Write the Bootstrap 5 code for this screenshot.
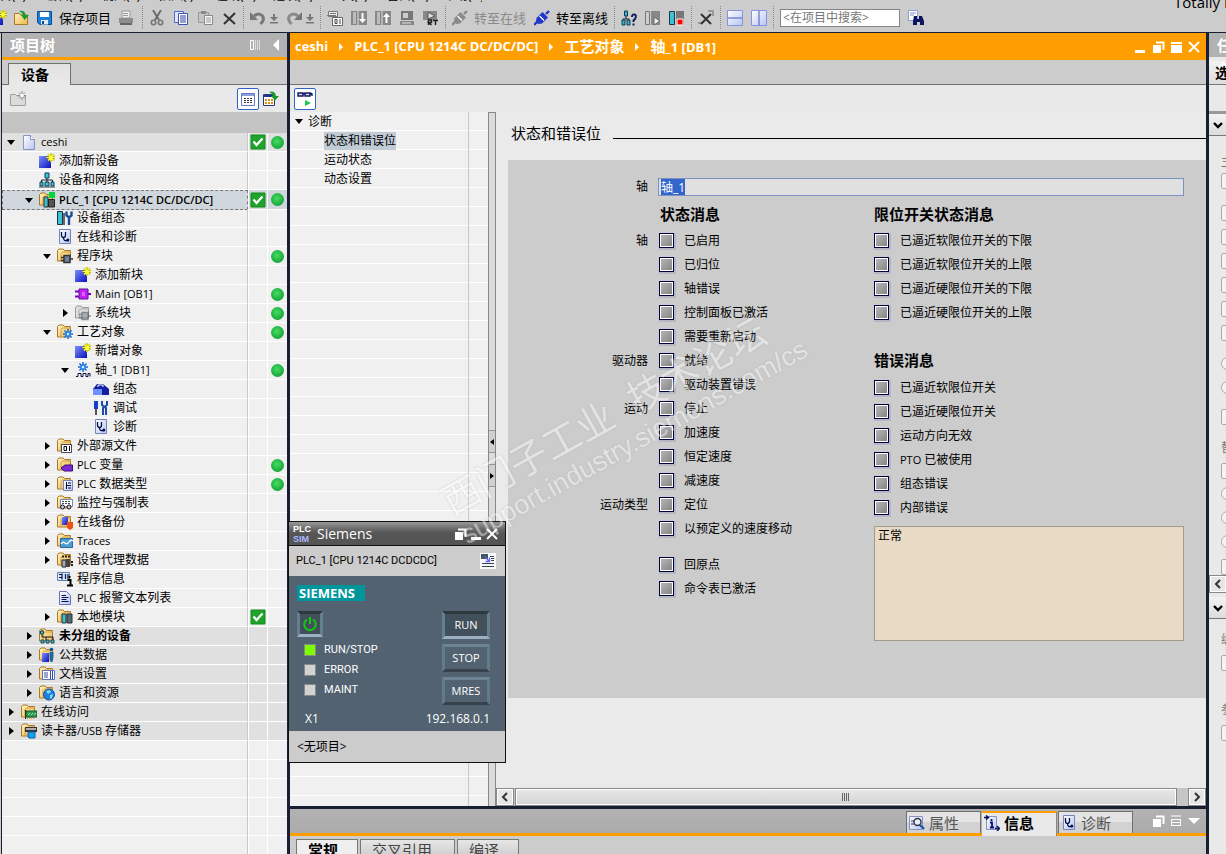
<!DOCTYPE html>
<html lang="zh-CN">
<head>
<meta charset="utf-8">
<meta name="viewport" content="width=device-width, initial-scale=1">
<title>ceshi - PLC_1 - 轴_1 [DB1]</title>
<link rel="stylesheet" href="https://cdn.jsdelivr.net/npm/bootstrap@5.3.0/dist/css/bootstrap.min.css">
<style>
:root{--edge:#191f33;--orange:#ff9e00;--face:#ccc;--head:#b2b2b2;--pane:#e9e9e9;--rule:#707070}
body{font:12px/18px "Open Sans","Noto Sans CJK SC",sans-serif;color:#000;background:var(--face);height:100vh}
button{font:inherit}
a{color:inherit;text-decoration:none}
.ico{width:16px;height:16px;flex:none;display:block;overflow:visible}
.half{width:7px;overflow:hidden}
.arw{width:8px}
/* menu bar and toolbar */
.menu{height:3px;gap:19px;align-items:flex-end}
.menu a{line-height:15px;width:38px;white-space:nowrap;flex:none}
.menu a:first-child{width:26px;direction:rtl}
.brandtxt{font-size:15px;line-height:20px;width:52px;white-space:nowrap;overflow:hidden;height:12px;display:flex;align-items:flex-end}
.tools{height:30px;border-bottom:1px solid var(--edge)}
.tools .grp{display:flex;align-items:center;gap:8px;padding:0 6px;border-right:1px dotted #888;height:23px}
.tools .grp.first{gap:7px;padding:0 8px 0 0}
.tools .grp.open{border:0}
.tb{border:0;background:none;padding:0;display:flex;align-items:center;gap:6px;font-size:13px;color:#000;white-space:nowrap}
.tb.pair{gap:4px}
.tb.off{color:#8a8a8a}
.find{width:120px;height:18px;border:1px solid #858585;background:#fff;font-size:12px;padding:0 2px;border-radius:0}
.find::placeholder{color:#777;opacity:1}
/* project tree */
.side{width:289px;border-left:1px solid var(--edge);border-right:3px solid var(--edge);margin-left:1px;flex:none}
.bar{height:24px;font-size:15px;font-weight:bold;color:#fff;background:var(--head);line-height:24px}
.side .bar{box-sizing:content-box;border-bottom:3px solid var(--orange)}
.tabs{height:25px;background:var(--face);border-bottom:1px solid var(--rule);align-items:flex-end}
.side .tabs{padding-left:6px}
.tabon{border:1px solid var(--rule);border-bottom:0;background:linear-gradient(#e2e2e2,#e9e9e9);height:22px;width:63px;font-size:14px;font-weight:bold;line-height:20px;margin-bottom:-1px;padding:0 0 0 12px;text-align:left}
.strip{height:27px;background:var(--pane)}
.boxed{border:1px solid #2f62c8;background:#fff;width:22px;height:22px;padding:2px;border-radius:2px}
.gap21{height:21px;background:#c3c3c3;flex:none}
.tree{list-style:none;margin:0;padding:0;flex:1 1 0;overflow:hidden;background:repeating-linear-gradient(#f0f0f0 0 18px,#fff 18px 19px)}
.tree li{display:grid;grid-template-columns:1fr 20px 19px;height:19px}
.tree .rest{height:100%}
.cellm{display:flex;align-items:center;gap:4px;white-space:nowrap;border-right:1px solid #c8c8c8;min-width:0;padding-left:3px}
.st{border-right:1px solid #fff;border-left:1px solid #fff;display:flex;align-items:center;justify-content:center}
.tree li>*{border-bottom:1px solid #fff}
.tree .st+.st{border-left:0;border-right:0}
.tree .rest>*{border-bottom:0}
.shade>*{background:#e0e0e0}
.d1 .cellm{padding-left:21px}.d2 .cellm{padding-left:39px}.d3 .cellm{padding-left:57px}.d4 .cellm{padding-left:75px}
.sel>*{background:#d0d7dc}
.tree .sel .cellm{border:1px dashed #777;padding-left:20px}
.cellm a{font-size:11px}
.sel a{font-weight:600}
.cellm a b,.zh{font-size:12px;font-weight:inherit}
.tw{width:12px;height:12px;flex:none;display:flex;align-items:center;justify-content:center}
.tw.dn::before{content:"";border:4px solid transparent;border-top:5px solid #000;border-bottom:0}
.tw.rt::before{content:"";border:4px solid transparent;border-left:5px solid #000;border-right:0}
.dot::before{content:"";width:13px;height:13px;border-radius:50%;background:radial-gradient(circle at 45% 40%,#44dd62,#1fae40 60%,#17923a)}
/* editor */
.ed .bar{background:var(--orange);height:27px;line-height:25px;font-size:13px;gap:11px;padding-left:5px}
.bar .z{font-size:15px}
.bar i{border:4px solid transparent;border-left:4px solid #fff;border-right:0}
.nav2{width:198px;flex:none;background:linear-gradient(90deg,transparent 178px,#c8c8c8 178px 179px,transparent 179px),repeating-linear-gradient(#f0f0f0 0 18px,#fff 18px 19px)}
.nav2 ul{list-style:none;margin:0;padding:0}
.nav2 li{height:19px;display:flex;align-items:center;gap:3px;padding-left:3px}
.nav2 li.sub{padding-left:34px}
.nav2 .on{background:#c1cbd6}
.split{width:8px;flex:none;background:#dcdcdc;border:1px solid #888;border-width:1px 1px 0;flex-direction:column;gap:11px;padding-top:317px}
.split button{width:6px;height:23px;border:1px solid #999;border-width:1px 0;background:#d0d0d0;padding:0;display:flex;align-items:center;justify-content:center}
.split .l::before{content:"";border:3px solid transparent;border-right:4px solid #000;border-left:0}
.split .r::before{content:"";border:3px solid transparent;border-left:4px solid #000;border-right:0}
.work{background:#eaeaea;min-width:0}
.ttl{padding:11px 0 0 15px;gap:12px;height:48px}
.ttl .ln{flex:1;border-top:1px solid #000;margin-top:15px;height:0}
.ttl h1{font-size:15px;line-height:20px;font-weight:400;margin:0;white-space:nowrap}
.sheet{background:var(--face);margin-left:12px;padding:18px 22px 57px 0}
.gl{width:140px;text-align:right;flex:none}
.field{height:18px;border:1px solid #7d93bf;background:#e0e0e0;font-size:12px;line-height:16px;padding:0 2px;flex:1;min-width:0;outline:0;border-radius:0;margin-left:10px}
.field::selection{background:#3366cc;color:#fff}
.colA{width:366px;flex:none}
.sheet h2{font-size:15px;line-height:32px;font-weight:bold;margin:0;height:32px;padding-top:2px}
.sheet h2.er{height:51px;padding-top:20px}
.srow{display:flex;height:24px;align-items:center;padding-top:2px}
.srow label{display:flex;align-items:center;gap:11px;white-space:nowrap}
.colA .srow label{margin-left:11px;gap:10px}
.sheet input[type=checkbox]{appearance:none;width:15px;height:15px;margin:0 0 2px;border:1px solid #00003c;box-shadow:inset 0 0 0 1px #fff,1px 1px 0 1px #b4b8c4;background:linear-gradient(135deg,#bababa,#808080)}
.skip{margin-top:12px}
.note{width:100%;height:115px;margin-top:7px;border:1px solid #a29a8c;background:#e8dac5;resize:none;padding:0 3px;line-height:18px;display:block;border-radius:0;outline:0}
.hs{height:18px;background:#c6c6c6;gap:1px}
.hs button,.sbtn{width:18px;height:18px;border:1px solid #888;background:#e6e6e6;padding:0;display:flex;align-items:center;justify-content:center;box-shadow:inset 0 0 0 1px #fff}
.hs .thumb{flex:1;margin-right:10px;border:1px solid #888;background:linear-gradient(#e8e8e8,#d4d4d4);box-shadow:inset 0 0 0 1px #fff;display:flex;align-items:center;justify-content:center}
.grip{width:8px;height:8px;background:repeating-linear-gradient(90deg,#666 0 1px,transparent 1px 2px)}
/* inspector */
.insp{height:48px;border-top:3px solid var(--edge);flex:none}
.insp .row1{height:24px;background:linear-gradient(#b2b2b2,#acacac);align-items:flex-end;gap:1px;padding-right:4px}
.itab{width:75px;height:22px;border:1px solid var(--rule);border-bottom:0;background:linear-gradient(#e4e4e4 0 50%,#d2d2d2 50%);display:flex;align-items:center;gap:4px;padding:0 2px;font-size:15px;color:#555;white-space:nowrap;border-radius:0}
.itab.on{border-color:var(--orange);border-top:2px solid var(--orange);border-left:0;border-right-color:#888;background:var(--pane);color:#000;font-weight:bold;height:25px;margin-bottom:-3px;padding-bottom:3px}
.insp .row2{border-top:3px solid var(--orange);padding:3px 6px 0;gap:2px;height:21px;overflow:hidden}
.jtab{border:1px solid #777;background:linear-gradient(#e6e6e6,#c8c8c8);font-size:15px;line-height:17px;padding:0 0 0 11px;width:62px;height:22px;color:#444;flex:none;text-align:left}
.jtab.on{font-weight:bold;color:#000;background:#efefef}
.jtab.w{width:95px}
/* task cards */
.task{width:20px;border-left:3px solid var(--edge);flex:none;background:var(--pane);overflow:hidden}
.task .cap{height:22px;background:linear-gradient(#f2f2f2,#dcdcdc);border-bottom:1px solid #777;display:flex;align-items:center;font-weight:bold;font-size:14px;white-space:nowrap;overflow:hidden;padding-left:6px}
.task .cap.tall{height:24px}
.task .band{height:29px;border-bottom:3px solid #999}
.task .in{padding:14px 0 0 12px;display:flex;flex-direction:column}
.task .in.top{padding-top:19px}
.task input{width:24px;height:16px;border:1px solid #aaa;background:#f4f4f4;appearance:none;margin:0 0 8px;flex:none;border-radius:2px}
.task input[type=radio]{width:13px;height:13px;border-radius:50%;margin-bottom:11px}
.task .t{height:14px;line-height:14px;color:#777;overflow:hidden;width:9px}
/* simulator window */
.plcsim{position:absolute;left:288px;top:488px;width:218px;height:242px;border:1px solid #111;z-index:4;font-size:11px;background:var(--face);display:flex;flex-direction:column}
.plcsim .cap{height:24px;background:linear-gradient(#999,#6a6a6a 30%,#555 50%);border-bottom:1px solid #111;color:#fff;font-size:14px;padding:0 5px 0 4px}
.logo{font:bold 9px/10px "Liberation Sans",sans-serif;color:#fff;width:20px}
.logo span{color:#a9b6ff;display:block}
.plcsim .idn{height:30px;padding:0 9px 0 7px;line-height:30px;font-family:Roboto,sans-serif}
.plcsim .body2{background:#526270;color:#fff;height:155px;padding:9px 15px 0 8px}
.sie{background:#00969b;font-weight:bold;font-size:13px;line-height:16px;padding:0 2px;width:68px}
.pbtn{width:48px;height:28px;background:#526270;border:3px solid #627b8a;border-top-color:#6b8595;border-bottom-color:#37424c;color:#fff;font-size:11px;padding:0;line-height:20px}
.pbtn.dn{background:#42505c;border-color:#2e3840 #64808e #9cb0c4 #64808e}
.pbtn.sq{width:26px;height:26px;margin-bottom:3px}
.lrow{display:flex;align-items:center;gap:8px;height:20px;padding-left:7px;font-family:Roboto,sans-serif}
.led{width:12px;height:12px;border:1px solid #888;background:#d2d2d2}
.led.go{background:#7cff00}
.wm{position:absolute;left:435px;top:453px;transform:rotate(-29deg);transform-origin:0 0;color:#fff;opacity:.45;text-shadow:0 0 2px #999;z-index:6;pointer-events:none;white-space:nowrap;font-family:"Liberation Sans","Noto Sans CJK SC",sans-serif}
.wm div:first-child{font-size:38px;line-height:44px}
.wm div:last-child{font-size:27px;line-height:28px}
</style>
</head>
<body class="d-flex flex-column overflow-hidden">
<svg width="0" height="0" class="position-absolute" aria-hidden="true"><defs>
<linearGradient id="gf" x1="0" y1="0" x2="1" y2="1"><stop offset="0" stop-color="#fff2c0"/><stop offset="1" stop-color="#eeb84c"/></linearGradient>
<linearGradient id="gb" x1="0" y1="0" x2="1" y2="1"><stop offset="0" stop-color="#7c90ff"/><stop offset="1" stop-color="#0a10b8"/></linearGradient>
<linearGradient id="gw" x1="0" y1="0" x2="1" y2="1"><stop offset="0" stop-color="#fff"/><stop offset="1" stop-color="#b8c4f0"/></linearGradient>
<symbol id="folder" viewBox="0 0 16 16"><path d="M.5 2.500 2 1h4l1.500 1.500h6V13H.5z" fill="url(#gf)" stroke="#a87a28"/><path d="M4 13V5.500L5.500 4H14" fill="none" stroke="#d29c3c"/></symbol>
<symbol id="folderg" viewBox="0 0 16 16"><path d="M.5 2.500 2 1h4l1.500 1.500h6V13H.5z" fill="#dedede" stroke="#999"/><path d="M4 13V5.500L5.500 4H14" fill="none" stroke="#aaa"/></symbol>
<symbol id="page" viewBox="0 0 16 16"><path d="M2.500 1.500h7l4 4v10h-11z" fill="url(#gw)" stroke="#8494c4"/><path d="M9.500 1.500v4h4" fill="#fff" stroke="#8494c4"/></symbol>
<symbol id="doc" viewBox="0 0 16 16"><path d="M2.500 1.500h7l4 4v9h-11z" fill="url(#gw)" stroke="#6474b4"/><path d="M4.500 5.500H9M4.500 7.500h7M4.500 9.500h5M4.500 11.500h7" stroke="#00104c"/></symbol>
<symbol id="newd" viewBox="0 0 16 16"><path d="M0 3h12v12H0z" fill="url(#gb)"/><path d="M12 0v9M7.500 4.500h9M9 1.500l6 6M15 1.500l-6 6" stroke="#8c8c00" stroke-width="1.800"/><path d="M12 0v9M7.500 4.500h9M9 1.500l6 6M15 1.500l-6 6" stroke="#ffff3c" stroke-width="1.200"/></symbol>
<symbol id="net" viewBox="0 0 16 16"><path d="M8 5v3M2.500 11V8h11v3M8 8v3" fill="none" stroke="#123"/><path d="M6 1h4v5H6zM1 10h3v4H1zM6 10h4v4H6zM12 10h3v4h-3z" fill="#35c8d8" stroke="#1b3a50"/><path d="M0 15h16" stroke="#345"/></symbol>
<symbol id="o-plc" viewBox="0 0 16 16"><path d="M5 5h4v10H5z" fill="#3ac0d0" stroke="#333"/><path d="M9.500 7.500h6V15h-6z" fill="#555" stroke="#222"/><path d="M10 0h6v6h-6z" fill="#00d640"/></symbol>
<symbol id="conf" viewBox="0 0 16 16"><path d="M.5 1.500h5v13h-5z" fill="#38c4d4" stroke="#234"/><path d="M6 3h2v12H6z" fill="#667"/><path d="M9.500 1.500v4l2.500 2 2.500-2v-4M12 7v8" fill="none" stroke="#1c4a94" stroke-width="2.400"/></symbol>
<symbol id="diag" viewBox="0 0 16 16"><path d="M2.500.500h11v14h-11z" fill="url(#gw)" stroke="#7484bc"/><path d="M4.500 3v3q0 2.500 2 2.500T8.500 6V3M6.500 8.500q0 4 4 3" fill="none" stroke="#00104c" stroke-width="1.300"/><circle cx="10.800" cy="11" r="1.500" fill="#00104c"/></symbol>
<symbol id="o-block" viewBox="0 0 16 16"><path d="M4 9.500h3M4 12.500h3M13 11h3" stroke="#333" stroke-width="1.500"/><path d="M7 7.500h6v7H7z" fill="#70809c" stroke="#333" stroke-width="1.500"/></symbol>
<symbol id="ob" viewBox="0 0 16 16"><path d="M0 5.500h4M0 10.500h4M12 8h4" stroke="#70c" stroke-width="2"/><path d="M4 3h9v10H4z" fill="#c020f0" stroke="#60109c"/><path d="M7 6h3v4H7z" fill="#d860ff"/></symbol>
<symbol id="gear" viewBox="0 0 16 16"><path d="M8 0v16M0 8h16M2.300 2.300l11.400 11.400M13.700 2.300 2.300 13.700" stroke="#1b6ad0" stroke-width="2.400"/><circle cx="8" cy="8" r="5" fill="#2c8ae8"/><circle cx="8" cy="8" r="1.800" fill="#fff"/></symbol>
<symbol id="axis" viewBox="0 0 16 16"><use href="#gear" x="3" y="0" width="10" height="10"/><path d="M1 14.500h2v-3h3v3h2v-3h3v3h2v-3h2v3" fill="none" stroke="#101040"/></symbol>
<symbol id="tbox" viewBox="0 0 16 16"><path d="M0 8 4 3h6l6 5v6H0z" fill="#1520a0"/><path d="M0 8h9v6H0z" fill="#6f90ff"/><path d="M5 6V4h5v2" stroke="#fff" fill="none"/></symbol>
<symbol id="test" viewBox="0 0 16 16"><path d="M1 1h4v8H1z" fill="#1040d0"/><path d="M3 9v6" stroke="#222" stroke-width="1.500"/><path d="M9 1v4l4 3v7M14 1v4l-4 3v7" fill="none" stroke="#1c4aa8" stroke-width="2"/></symbol>
<symbol id="o-01" viewBox="0 0 16 16"><path d="M4.500 6.500h10v8h-10z" fill="#fff" stroke="#445"/><path d="M7 8.500h2.500v4H7zM12.500 8v5" fill="none" stroke="#001"/></symbol>
<symbol id="o-tag" viewBox="0 0 16 16"><path d="M4 11l4-3h7.500v6H7z" fill="#7a2ad0" stroke="#3c0c80"/></symbol>
<symbol id="o-type" viewBox="0 0 16 16"><path d="M6.500 4.500h9v10h-9z" fill="url(#gw)" stroke="#7484bc"/><path d="M9.500 6v7M9 9.500h2M11 7h3M11 9.500h3M11 12h3" stroke="#001040"/></symbol>
<symbol id="o-watch" viewBox="0 0 16 16"><path d="M3.500 4.500h12v7h-12z" fill="#fff" stroke="#7888b8"/><path d="M5 6.500h9M5 8.500h9" stroke="#445" stroke-dasharray="2 1"/><circle cx="5.500" cy="12" r="2" fill="#ccd" stroke="#112"/><circle cx="12" cy="12" r="2" fill="#ccd" stroke="#112"/></symbol>
<symbol id="o-bak" viewBox="0 0 16 16"><path d="M5 3h6v8H5z" fill="url(#gb)"/><path d="M10 8h6v6l-3 2-3-2z" fill="#f05010"/></symbol>
<symbol id="o-trace" viewBox="0 0 16 16"><path d="M3.500 5.500h12v9h-12z" fill="#4c9cd4" stroke="#2a6a9c"/><path d="M4 11q2-3 4-1t4-1 4-1" fill="none" stroke="#fff" stroke-width="1.300"/></symbol>
<symbol id="o-proxy" viewBox="0 0 16 16"><path d="M5 8h4v7H5z" fill="#aaa" stroke="#222"/><path d="M9 7h4v8H9z" fill="#444"/><path d="M5 4.500h9M15 9v6" stroke="#222" stroke-width="2" stroke-dasharray="2 1"/></symbol>
<symbol id="pinfo" viewBox="0 0 16 16"><path d="M.5 1.500h12v8H.5z" fill="#d4e6f8" stroke="#5c84b4"/><path d="M2 3.500h3M2 6.500h3M5 2.500v6M8.500 3v5M11 3v5" stroke="#114" stroke-width="1.200"/><path d="M12.500 5v2M10.500 9h3v5M10 14.500h6" fill="none" stroke="#000" stroke-width="2"/></symbol>
<symbol id="o-mod" viewBox="0 0 16 16"><path d="M5 5h4v9H5z" fill="#3ac0d0" stroke="#333"/><path d="M10 5h5v9h-5z" fill="#567" stroke="#233"/></symbol>
<symbol id="o-ung" viewBox="0 0 16 16"><path d="M3 2v7h11v3M7 9v3" fill="none" stroke="#113"/><path d="M1.500 3h3v3h-3zM2 12h3v3H2zM7 12h3v3H7zM12 12h3v3h-3z" fill="#3ac0d0" stroke="#245"/></symbol>
<symbol id="o-com" viewBox="0 0 16 16"><path d="M3 6h7v9H3z" fill="url(#gb)"/><circle cx="12.500" cy="2.500" r="1.800" fill="#158"/><path d="M10.500 5h4v5l-1 5h-2l-1-5z" fill="#1c68a0"/></symbol>
<symbol id="o-doc" viewBox="0 0 16 16"><path d="M3.500 4.500h12v9h-12z" fill="#fff" stroke="#5c70c0"/><path d="M5 7h4M5 9h4M5 11h4M11.500 5v8M13.500 5v8" stroke="#334a9c"/></symbol>
<symbol id="o-lang" viewBox="0 0 16 16"><circle cx="10" cy="9.500" r="5.500" fill="#2080e0" stroke="#1450a0"/><path d="M7 6l4-1 1 2-3 2zM11 10l3-1-1 4-2 1z" fill="#78e0e8"/></symbol>
<symbol id="o-acc" viewBox="0 0 16 16"><path d="M4.500 6v9" stroke="#222"/><path d="M5 7h11v6H5z" fill="#2c9a50" stroke="#145c2c"/><path d="M6 14.500h8" stroke="#e0b030" stroke-dasharray="1 1"/><path d="M7 11l2-2M10 11l2-2M13 11l2-2" stroke="#9ee0b0" fill="none"/></symbol>
<symbol id="o-usb" viewBox="0 0 16 16"><path d="M4 4h12v5H4z" fill="#333"/><path d="M5 6h10" stroke="#ddd" stroke-width="1.500"/><path d="M7 9h7v6H8l-1-1z" fill="#18a0f0" stroke="#0a60a8"/></symbol>
<symbol id="chk" viewBox="0 0 16 16"><path d="M1 1h14v14H1z" fill="#1fa32b" stroke="#128a1c"/><path d="M3.500 7.500 6.500 11 12.500 4.500" fill="none" stroke="#fff" stroke-width="2.200"/></symbol>
<symbol id="open" viewBox="0 0 16 16"><path d="M.5 3.500h5l1 1.500h7v9.500H.5z" fill="url(#gf)" stroke="#a87a28"/><path d="M5 1q6-1 6.500 4H15l-4.500 5L7 5h2Q8.500 2.500 5 1z" fill="#1c9a30"/></symbol>
<symbol id="save" viewBox="0 0 16 16"><path d="M.5 1.500h14v13H3l-2.500-2z" fill="#1a80d8" stroke="#0a4c94"/><path d="M3 2h9v5H3z" fill="#fff"/><path d="M4 10h7v4.500H4z" fill="#dfeaf6"/><path d="M5 11h2v3H5z" fill="#0a4c94"/></symbol>
<symbol id="print" viewBox="0 0 16 16"><path d="M4 1h8v7H4z" fill="#eee" stroke="#999"/><path d="M5 3.500h5M5 5.500h5" stroke="#999"/><path d="M1 8h14v5H1z" fill="#8c8c8c"/><path d="M2 14h12" stroke="#666" stroke-width="2"/></symbol>
<symbol id="cut" viewBox="0 0 16 16"><path d="M4 0l6 10M12 0 6 10" stroke="#666" stroke-width="1.800"/><circle cx="4.500" cy="12.500" r="2.200" fill="none" stroke="#777" stroke-width="1.600"/><circle cx="11.500" cy="12.500" r="2.200" fill="none" stroke="#777" stroke-width="1.600"/></symbol>
<symbol id="copy" viewBox="0 0 16 16"><path d="M1.500 1.500h9v11h-9z" fill="#dfe6ff" stroke="#5468c4"/><path d="M5.500 3.500h9v11h-9z" fill="#fff" stroke="#3c50b4"/><path d="M7 6h6M7 8h6M7 10h6M7 12h6" stroke="#3040a0"/></symbol>
<symbol id="paste" viewBox="0 0 16 16"><path d="M1.500 2.500h10v10h-10z" fill="#c4c4c4" stroke="#999"/><path d="M4 1h5v3H4z" fill="#888"/><path d="M7.500 5.500h8v9h-8z" fill="#f6f6f6" stroke="#888"/><path d="M9 8h5M9 10h5M9 12h5" stroke="#999"/></symbol>
<symbol id="del" viewBox="0 0 16 16"><path d="M3 4l11 10M14 3 3 14" stroke="#333" stroke-width="2"/></symbol>
<symbol id="undo" viewBox="0 0 16 16"><path d="M4 6q5-4 8.500 0 2.500 4-2 8" fill="none" stroke="#777" stroke-width="3"/><path d="M0 2v8h8z" fill="#777"/></symbol>
<symbol id="redo" viewBox="0 0 16 16"><path d="M12 6Q7 2 3.500 6 1 10 5.500 14" fill="none" stroke="#8a8a8a" stroke-width="3"/><path d="M16 2v8H8z" fill="#777"/></symbol>
<symbol id="dwn" viewBox="0 0 8 16"><path d="M4 4v4" stroke="#777" stroke-width="2"/><path d="M0 7h8l-4 4zM0 12h8v1.500H0z" fill="#777"/></symbol>
<symbol id="comp" viewBox="0 0 16 16"><path d="M1.500 1.500h9v5h-9z" fill="#eee" stroke="#777"/><path d="M3 3.500h6M0 5.500h9" stroke="#777"/><path d="M5.500 7.500h10v8h-10z" fill="#fff" stroke="#666"/><path d="M8 9.500h2v4H8zM13 9v5" fill="none" stroke="#444"/></symbol>
<symbol id="dl" viewBox="0 0 16 16"><path d="M0 1h16v14H0z" fill="#888"/><path d="M2 2h3v12H2z" fill="#bbb"/><path d="M7 1v14" stroke="#ddd"/><path d="M11.500 3v7" stroke="#fff" stroke-width="2"/><path d="M8 9h7l-3.500 4z" fill="#fff"/></symbol>
<symbol id="ul" viewBox="0 0 16 16"><path d="M0 1h16v14H0z" fill="#888"/><path d="M2 2h3v12H2z" fill="#bbb"/><path d="M7 1v14" stroke="#ddd"/><path d="M11.500 6v7" stroke="#fff" stroke-width="2"/><path d="M8 7h7l-3.500-4z" fill="#fff"/></symbol>
<symbol id="pc" viewBox="0 0 16 16"><path d="M2 1h12v9H2z" fill="#777"/><path d="M4 3h5v5H4z" fill="#ccc"/><path d="M1 11h14v4H1z" fill="#888"/><path d="M3 13h9" stroke="#ddd"/></symbol>
<symbol id="rt" viewBox="0 0 16 16"><path d="M0 1h14v9H0z" fill="#888"/><path d="M5 2l7 4-7 3z" fill="#ddd" stroke="#555"/><path d="M5.500 15v-5h3v2.500h-3l3 2.500M10 10.500h5M12.500 10v5" fill="none" stroke="#222" stroke-width="1.500"/></symbol>
<symbol id="plug" viewBox="0 0 16 16"><path d="M0 15l4-4M12 4l3-3" stroke="currentColor" stroke-width="2.400"/><path d="M2.500 8l6-6 5.500 5.500-6 6-4 .5L2 11z" fill="currentColor"/><path d="M5.500 6l4.500 4.500" stroke="#fff" stroke-width="1.200"/></symbol>
<symbol id="netq" viewBox="0 0 16 16"><path d="M5 6v3M2 11V9h6v2" fill="none" stroke="#123"/><path d="M3.500 1h3v5h-3zM1 10h3v5H1zM6 10h3v5H6z" fill="#2cb8c8" stroke="#1b3a50"/><path d="M11 7q0-3 2.500-2.500T14 9l-1.500 1.500V12M12.500 13.500v2" fill="none" stroke="#102060" stroke-width="2"/></symbol>
<symbol id="st1" viewBox="0 0 16 16"><path d="M.5 1.500h4v13h-4z" fill="#ccc" stroke="#777"/><path d="M6 1h9v14H6z" fill="#888"/><path d="M9 7l6 4-6 4z" fill="#eee" stroke="#666"/></symbol>
<symbol id="st2" viewBox="0 0 16 16"><path d="M.5 1.500h5v13h-5z" fill="#38c4d4" stroke="#234"/><path d="M7 1h8v14H7z" fill="#777"/><path d="M8 9h6v6H8z" fill="#f00" stroke="#fff"/></symbol>
<symbol id="xl" viewBox="0 0 16 16"><path d="M10 1h5v5M0 13h5" stroke="#999" stroke-width="2" fill="none"/><path d="M3 4l10 10M13 4 3 14" stroke="#333" stroke-width="2"/></symbol>
<symbol id="sh" viewBox="0 0 16 16"><path d="M.5.500h15v15H.5z" fill="url(#gw)" stroke="#8494e0"/><path d="M1 8h14" stroke="#4058c8"/></symbol>
<symbol id="sv" viewBox="0 0 16 16"><path d="M.5.500h15v15H.5z" fill="url(#gw)" stroke="#8494e0"/><path d="M8 1v14" stroke="#4058c8"/></symbol>
<symbol id="bino" viewBox="0 0 16 16"><path d="M.5.500h9v10h-9z" fill="#fff" stroke="#8ca0d8"/><path d="M2 3h6M2 5h4" stroke="#8090c8"/><path d="M6 6h3v3h2V6h3l2 5v4h-4v-3h-3v3H5v-4z" fill="#0c1460"/></symbol>
<symbol id="newf" viewBox="0 0 16 16"><path d="M.5 3.500h5L7 5h8.500v9.500H.5z" fill="#dcdcdc" stroke="#a0a0a0"/><path d="M12 0v9M7.500 4.500h9M9 1.500l6 6M15 1.500l-6 6" stroke="#888"/><circle cx="12" cy="4.500" r="1.800" fill="#fff"/></symbol>
<symbol id="lst" viewBox="0 0 16 16"><path d="M1.500 2.500h13v12h-13z" fill="#fff" stroke="#6478c4"/><path d="M2 4h12" stroke="#8ca0e0" stroke-width="2"/><path d="M4 7.500h9M4 9.500h9M4 11.500h9" stroke="#334" stroke-dasharray="2 1"/></symbol>
<symbol id="exp" viewBox="0 0 16 16"><path d="M.5 3.500h11v11H.5z" fill="#fff" stroke="#223a80"/><path d="M1 5h10" stroke="#223a80" stroke-width="2"/><path d="M3 8v6M6 8v6M9 8v6" stroke="#e09010" stroke-width="2" stroke-dasharray="2 1"/><path d="M6 1q6-2 7 4h3l-4 4.500L8 5h2Q9 2 6 1z" fill="#1c9a30"/></symbol>
<symbol id="glas" viewBox="0 0 16 16"><path d="M1 2h5v3H1zM8 2h5v3H8zM6 3h2M13 2l2 1v2" fill="#dde" stroke="#0c1460" stroke-width="1.400"/><path d="M8 9l6 3-6 3z" fill="#1cc850"/></symbol>
<symbol id="prop" viewBox="0 0 16 16"><path d="M.5 1.500h13v13H.5z" fill="url(#gw)" stroke="#8494c4"/><path d="M2 6h3M2 9h3" stroke="#336"/><circle cx="8.500" cy="7" r="3.500" fill="#e8eefc" stroke="#334" stroke-width="1.400"/><path d="M11 10l4 4" stroke="#1c58a8" stroke-width="2.400"/></symbol>
<symbol id="info" viewBox="0 0 16 16"><path d="M2.500 1.500h10v13h-10z" fill="url(#gw)" stroke="#8494c4"/><path d="M0 2.500h4M2 .500l2.500 2L2 4.500M11 13.500h4M13 11l2.500 2.500L13 16" fill="none" stroke="#0c1460" stroke-width="1.500"/><path d="M7.500 4v2M6 7.500h2V12M6 12.500h4" fill="none" stroke="#0c1460" stroke-width="1.800"/></symbol>
<symbol id="w-min" viewBox="0 0 16 16"><path d="M3 11h10v3H3z" fill="#fff"/></symbol>
<symbol id="w-res" viewBox="0 0 16 16"><path d="M3 6h8v8H3z" fill="#fff"/><path d="M6 3.500h7.500V11" fill="none" stroke="#fff" stroke-width="2"/></symbol>
<symbol id="w-max" viewBox="0 0 16 16"><path d="M3 3h11v2H3zM3 6h11v8H3z" fill="#fff"/></symbol>
<symbol id="w-x" viewBox="0 0 16 16"><path d="M3 3l10 10M13 3 3 13" stroke="#fff" stroke-width="2"/></symbol>
<symbol id="w-ls" viewBox="0 0 16 16"><path d="M3 3h10M3 6.500h10M3 9.500h10M3 12.500h10M3.500 6v7M12.500 6v7" stroke="#fff"/></symbol>
<symbol id="w-dn" viewBox="0 0 16 16"><path d="M2 5h12l-6 6z" fill="#fff"/></symbol>
<symbol id="cols" viewBox="0 0 16 16"><path d="M3.500 3.500h3v9h-3z" fill="none" stroke="#fff"/><path d="M8.500 3v10M10.500 3v10M12.500 3v10" stroke="#ddd"/></symbol>
<symbol id="w-lf" viewBox="0 0 16 16"><path d="M12 2v12L6 8z" fill="#fff"/></symbol>
<symbol id="chl" viewBox="0 0 16 16"><path d="M10 4 6 8l4 4" fill="none" stroke="#333" stroke-width="2"/></symbol>
<symbol id="chr" viewBox="0 0 16 16"><path d="M6 4l4 4-4 4" fill="none" stroke="#333" stroke-width="2"/></symbol>
<symbol id="chd" viewBox="0 0 16 16"><path d="M5 6l4 4 4-4" fill="none" stroke="#000" stroke-width="2.400"/></symbol>
<symbol id="pwr" viewBox="0 0 16 16"><path d="M5 3.500a5.800 5.800 0 1 0 6 0M8 1v7" fill="none" stroke="#14c814" stroke-width="2"/></symbol>
<symbol id="shr" viewBox="0 0 16 16"><path d="M0 0h16v16H0z" fill="#f8f8f8"/><path d="M1 1h7v5H1z" fill="#456"/><path d="M5 4l4 4M9.500 4.500v4h-4" stroke="#66f" stroke-width="1.300" fill="none"/><path d="M10 3.500h4M11 5.500h3M11 7.500h3M2 10.500h12M2 13.500h12" stroke="#345"/></symbol>
</defs></svg>

<div class="d-flex justify-content-between align-items-start position-relative">
  <nav class="menu d-flex overflow-hidden" aria-label="菜单"><a href="#">项目(P)</a><a href="#">编辑(E)</a><a href="#">视图(V)</a><a href="#">插入(I)</a><a href="#">在线(O)</a><a href="#">选项(N)</a><a href="#">工具(T)</a><a href="#">窗口(W)</a><a href="#">帮助(H)</a></nav>
  <div class="brandtxt position-absolute end-0 top-0">Totally Integrated</div>
</div>
<div class="tools d-flex align-items-center flex-shrink-0">
  <div class="grp first">
    <button class="tb half" aria-label="新建"><svg class="ico" viewBox="9 0 16 16"><use href="#newd" width="16" height="16"/></svg></button>
    <button class="tb" aria-label="打开"><svg class="ico"><use href="#open"/></svg></button>
    <button class="tb"><svg class="ico"><use href="#save"/></svg>保存项目</button>
    <button class="tb" aria-label="打印"><svg class="ico"><use href="#print"/></svg></button>
  </div>
  <div class="grp">
    <button class="tb" aria-label="剪切"><svg class="ico"><use href="#cut"/></svg></button>
    <button class="tb" aria-label="复制"><svg class="ico"><use href="#copy"/></svg></button>
    <button class="tb" aria-label="粘贴"><svg class="ico"><use href="#paste"/></svg></button>
    <button class="tb" aria-label="删除"><svg class="ico"><use href="#del"/></svg></button>
  </div>
  <div class="grp">
    <button class="tb pair" aria-label="撤消"><svg class="ico"><use href="#undo"/></svg><svg class="ico arw"><use href="#dwn"/></svg></button>
    <button class="tb pair" aria-label="重做"><svg class="ico"><use href="#redo"/></svg><svg class="ico arw"><use href="#dwn"/></svg></button>
  </div>
  <div class="grp">
    <button class="tb" aria-label="编译"><svg class="ico"><use href="#comp"/></svg></button>
    <button class="tb" aria-label="下载"><svg class="ico"><use href="#dl"/></svg></button>
    <button class="tb" aria-label="上传"><svg class="ico"><use href="#ul"/></svg></button>
    <button class="tb" aria-label="仿真"><svg class="ico"><use href="#pc"/></svg></button>
    <button class="tb" aria-label="运行系统"><svg class="ico"><use href="#rt"/></svg></button>
  </div>
  <div class="grp">
    <button class="tb off"><svg class="ico"><use href="#plug"/></svg>转至在线</button>
    <button class="tb"><svg class="ico" color="#2038c8"><use href="#plug"/></svg>转至离线</button>
  </div>
  <div class="grp">
    <button class="tb" aria-label="可访问设备"><svg class="ico"><use href="#netq"/></svg></button>
    <button class="tb" aria-label="启动 CPU"><svg class="ico"><use href="#st1"/></svg></button>
    <button class="tb" aria-label="停止 CPU"><svg class="ico"><use href="#st2"/></svg></button>
  </div>
  <div class="grp"><button class="tb" aria-label="交叉引用"><svg class="ico"><use href="#xl"/></svg></button></div>
  <div class="grp">
    <button class="tb" aria-label="水平拆分"><svg class="ico"><use href="#sh"/></svg></button>
    <button class="tb" aria-label="垂直拆分"><svg class="ico"><use href="#sv"/></svg></button>
  </div>
  <div class="grp open">
    <input class="find" type="text" placeholder="&lt;在项目中搜索&gt;" aria-label="在项目中搜索">
    <button class="tb" aria-label="搜索"><svg class="ico"><use href="#bino"/></svg></button>
  </div>
</div>

<main class="d-flex flex-grow-1 position-relative" style="min-height:0">
  <aside class="side d-flex flex-column">
    <div class="bar d-flex align-items-center justify-content-between flex-shrink-0 px-1"><span class="ps-1">项目树</span><span class="d-flex gap-1"><svg class="ico"><use href="#cols"/></svg><svg class="ico"><use href="#w-lf"/></svg></span></div>
    <div class="tabs d-flex flex-shrink-0"><button class="tabon">设备</button></div>
    <div class="strip d-flex align-items-center justify-content-between ps-2 pe-2 flex-shrink-0">
      <button class="tb" aria-label="新建组"><svg class="ico"><use href="#newf"/></svg></button>
      <span class="d-flex gap-1 align-items-center"><button class="tb boxed" aria-label="列表"><svg class="ico"><use href="#lst"/></svg></button><button class="tb" aria-label="导出"><svg class="ico"><use href="#exp"/></svg></button></span>
    </div>
    <div class="gap21"></div>
    <ul class="tree">
      <li class="shade"><span class="cellm"><i class="tw dn"></i><svg class="ico"><use href="#page"/></svg><a href="#">ceshi</a></span><span class="st"><svg class="ico"><use href="#chk"/></svg></span><span class="st dot"></span></li>
      <li class="d1"><span class="cellm"><i class="tw"></i><svg class="ico"><use href="#newd"/></svg><a href="#"><b>添加新设备</b></a></span><span class="st"></span><span class="st"></span></li>
      <li class="d1"><span class="cellm"><i class="tw"></i><svg class="ico"><use href="#net"/></svg><a href="#"><b>设备和网络</b></a></span><span class="st"></span><span class="st"></span></li>
      <li class="d1 sel"><span class="cellm"><i class="tw dn"></i><svg class="ico"><use href="#folder"/><use href="#o-plc"/></svg><a href="#">PLC_1 [CPU 1214C DC/DC/DC]</a></span><span class="st"><svg class="ico"><use href="#chk"/></svg></span><span class="st dot"></span></li>
      <li class="d2"><span class="cellm"><i class="tw"></i><svg class="ico"><use href="#conf"/></svg><a href="#"><b>设备组态</b></a></span><span class="st"></span><span class="st"></span></li>
      <li class="d2"><span class="cellm"><i class="tw"></i><svg class="ico"><use href="#diag"/></svg><a href="#"><b>在线和诊断</b></a></span><span class="st"></span><span class="st"></span></li>
      <li class="d2"><span class="cellm"><i class="tw dn"></i><svg class="ico"><use href="#folder"/><use href="#o-block"/></svg><a href="#"><b>程序块</b></a></span><span class="st"></span><span class="st dot"></span></li>
      <li class="d3"><span class="cellm"><i class="tw"></i><svg class="ico"><use href="#newd"/></svg><a href="#"><b>添加新块</b></a></span><span class="st"></span><span class="st"></span></li>
      <li class="d3"><span class="cellm"><i class="tw"></i><svg class="ico"><use href="#ob"/></svg><a href="#">Main [OB1]</a></span><span class="st"></span><span class="st dot"></span></li>
      <li class="d3"><span class="cellm"><i class="tw rt"></i><svg class="ico"><use href="#folderg"/><use href="#o-block" opacity=".5"/></svg><a href="#"><b>系统块</b></a></span><span class="st"></span><span class="st dot"></span></li>
      <li class="d2"><span class="cellm"><i class="tw dn"></i><svg class="ico"><use href="#folder"/><use href="#gear" x="6" y="5" width="10" height="10"/></svg><a href="#"><b>工艺对象</b></a></span><span class="st"></span><span class="st dot"></span></li>
      <li class="d3"><span class="cellm"><i class="tw"></i><svg class="ico"><use href="#newd"/></svg><a href="#"><b>新增对象</b></a></span><span class="st"></span><span class="st"></span></li>
      <li class="d3"><span class="cellm"><i class="tw dn"></i><svg class="ico"><use href="#axis"/></svg><a href="#"><b>轴</b>_1 [DB1]</a></span><span class="st"></span><span class="st dot"></span></li>
      <li class="d4"><span class="cellm"><i class="tw"></i><svg class="ico"><use href="#tbox"/></svg><a href="#"><b>组态</b></a></span><span class="st"></span><span class="st"></span></li>
      <li class="d4"><span class="cellm"><i class="tw"></i><svg class="ico"><use href="#test"/></svg><a href="#"><b>调试</b></a></span><span class="st"></span><span class="st"></span></li>
      <li class="d4"><span class="cellm"><i class="tw"></i><svg class="ico"><use href="#diag"/></svg><a href="#"><b>诊断</b></a></span><span class="st"></span><span class="st"></span></li>
      <li class="d2"><span class="cellm"><i class="tw rt"></i><svg class="ico"><use href="#folder"/><use href="#o-01"/></svg><a href="#"><b>外部源文件</b></a></span><span class="st"></span><span class="st"></span></li>
      <li class="d2"><span class="cellm"><i class="tw rt"></i><svg class="ico"><use href="#folder"/><use href="#o-tag"/></svg><a href="#">PLC <b>变量</b></a></span><span class="st"></span><span class="st dot"></span></li>
      <li class="d2"><span class="cellm"><i class="tw rt"></i><svg class="ico"><use href="#folder"/><use href="#o-type"/></svg><a href="#">PLC <b>数据类型</b></a></span><span class="st"></span><span class="st dot"></span></li>
      <li class="d2"><span class="cellm"><i class="tw rt"></i><svg class="ico"><use href="#folder"/><use href="#o-watch"/></svg><a href="#"><b>监控与强制表</b></a></span><span class="st"></span><span class="st"></span></li>
      <li class="d2"><span class="cellm"><i class="tw rt"></i><svg class="ico"><use href="#folder"/><use href="#o-bak"/></svg><a href="#"><b>在线备份</b></a></span><span class="st"></span><span class="st"></span></li>
      <li class="d2"><span class="cellm"><i class="tw rt"></i><svg class="ico"><use href="#folder"/><use href="#o-trace"/></svg><a href="#">Traces</a></span><span class="st"></span><span class="st"></span></li>
      <li class="d2"><span class="cellm"><i class="tw rt"></i><svg class="ico"><use href="#folder"/><use href="#o-proxy"/></svg><a href="#"><b>设备代理数据</b></a></span><span class="st"></span><span class="st"></span></li>
      <li class="d2"><span class="cellm"><i class="tw"></i><svg class="ico"><use href="#pinfo"/></svg><a href="#"><b>程序信息</b></a></span><span class="st"></span><span class="st"></span></li>
      <li class="d2"><span class="cellm"><i class="tw"></i><svg class="ico"><use href="#doc"/></svg><a href="#">PLC <b>报警文本列表</b></a></span><span class="st"></span><span class="st"></span></li>
      <li class="d2"><span class="cellm"><i class="tw rt"></i><svg class="ico"><use href="#folder"/><use href="#o-mod"/></svg><a href="#"><b>本地模块</b></a></span><span class="st"><svg class="ico"><use href="#chk"/></svg></span><span class="st"></span></li>
      <li class="d1 shade fw-bold"><span class="cellm"><i class="tw rt"></i><svg class="ico"><use href="#folder"/><use href="#o-ung"/></svg><a href="#"><b>未分组的设备</b></a></span><span class="st"></span><span class="st"></span></li>
      <li class="d1 shade"><span class="cellm"><i class="tw rt"></i><svg class="ico"><use href="#folder"/><use href="#o-com"/></svg><a href="#"><b>公共数据</b></a></span><span class="st"></span><span class="st"></span></li>
      <li class="d1 shade"><span class="cellm"><i class="tw rt"></i><svg class="ico"><use href="#folder"/><use href="#o-doc"/></svg><a href="#"><b>文档设置</b></a></span><span class="st"></span><span class="st"></span></li>
      <li class="d1 shade"><span class="cellm"><i class="tw rt"></i><svg class="ico"><use href="#folder"/><use href="#o-lang"/></svg><a href="#"><b>语言和资源</b></a></span><span class="st"></span><span class="st"></span></li>
      <li class="shade"><span class="cellm"><i class="tw rt"></i><svg class="ico"><use href="#folder"/><use href="#o-acc"/></svg><a href="#"><b>在线访问</b></a></span><span class="st"></span><span class="st"></span></li>
      <li class="shade"><span class="cellm"><i class="tw rt"></i><svg class="ico"><use href="#folder"/><use href="#o-usb"/></svg><a href="#"><b>读卡器</b>/USB <b>存储器</b></a></span><span class="st"></span><span class="st"></span></li>
      <li class="rest"><span class="cellm"></span><span class="st"></span><span class="st"></span></li>
    </ul>
  </aside>

  <section class="ed d-flex flex-column flex-grow-1" style="min-width:0">
    <div class="bar d-flex align-items-center flex-shrink-0">
      <span>ceshi</span><i></i><span>PLC_1 [CPU 1214C DC/DC/DC]</span><i></i><span class="z">工艺对象</span><i></i><span><span class="z">轴</span>_1 [DB1]</span>
      <span class="d-flex ms-auto pe-1" style="gap:2px"><svg class="ico"><use href="#w-min"/></svg><svg class="ico"><use href="#w-res"/></svg><svg class="ico"><use href="#w-max"/></svg><svg class="ico"><use href="#w-x"/></svg></span>
    </div>
    <div class="tabs flex-shrink-0"></div>
    <div class="strip d-flex align-items-center ps-1 flex-shrink-0"><button class="tb boxed" aria-label="监视"><svg class="ico"><use href="#glas"/></svg></button></div>
    <div class="d-flex flex-grow-1" style="min-height:0">
      <nav class="nav2" aria-label="诊断"><ul><li><i class="tw dn"></i><a href="#">诊断</a></li><li class="sub"><a class="on" href="#">状态和错误位</a></li><li class="sub"><a href="#">运动状态</a></li><li class="sub"><a href="#">动态设置</a></li></ul></nav>
      <div class="split d-flex"><button class="l" aria-label="收起"></button><button class="r" aria-label="展开"></button></div>
      <div class="work d-flex flex-column flex-grow-1">
        <div class="ttl d-flex"><h1>状态和错误位</h1><span class="ln"></span></div>
        <form class="sheet">
          <div class="d-flex"><label class="gl" for="ax">轴</label><input class="field" id="ax" type="text" value="轴_1"></div>
          <div class="d-flex">
            <div class="colA">
              <div class="d-flex"><span class="gl"></span><h2 class="ms-2 ps-1">状态消息</h2></div>
              <div class="srow"><span class="gl">轴</span><label><input type="checkbox">已启用</label></div>
              <div class="srow"><span class="gl"></span><label><input type="checkbox">已归位</label></div>
              <div class="srow"><span class="gl"></span><label><input type="checkbox">轴错误</label></div>
              <div class="srow"><span class="gl"></span><label><input type="checkbox">控制面板已激活</label></div>
              <div class="srow"><span class="gl"></span><label><input type="checkbox">需要重新启动</label></div>
              <div class="srow"><span class="gl">驱动器</span><label><input type="checkbox">就绪</label></div>
              <div class="srow"><span class="gl"></span><label><input type="checkbox">驱动装置错误</label></div>
              <div class="srow"><span class="gl">运动</span><label><input type="checkbox">停止</label></div>
              <div class="srow"><span class="gl"></span><label><input type="checkbox">加速度</label></div>
              <div class="srow"><span class="gl"></span><label><input type="checkbox">恒定速度</label></div>
              <div class="srow"><span class="gl"></span><label><input type="checkbox">减速度</label></div>
              <div class="srow"><span class="gl">运动类型</span><label><input type="checkbox">定位</label></div>
              <div class="srow"><span class="gl"></span><label><input type="checkbox">以预定义的速度移动</label></div>
              <div class="srow skip"><span class="gl"></span><label><input type="checkbox">回原点</label></div>
              <div class="srow"><span class="gl"></span><label><input type="checkbox">命令表已激活</label></div>
            </div>
            <div class="flex-grow-1">
              <h2>限位开关状态消息</h2>
              <div class="srow"><label><input type="checkbox">已逼近软限位开关的下限</label></div>
              <div class="srow"><label><input type="checkbox">已逼近软限位开关的上限</label></div>
              <div class="srow"><label><input type="checkbox">已逼近硬限位开关的下限</label></div>
              <div class="srow"><label><input type="checkbox">已逼近硬限位开关的上限</label></div>
              <h2 class="er">错误消息</h2>
              <div class="srow"><label><input type="checkbox">已逼近软限位开关</label></div>
              <div class="srow"><label><input type="checkbox">已逼近硬限位开关</label></div>
              <div class="srow"><label><input type="checkbox">运动方向无效</label></div>
              <div class="srow"><label><input type="checkbox"><span><span style="font-size:11px">PTO</span> 已被使用</span></label></div>
              <div class="srow"><label><input type="checkbox">组态错误</label></div>
              <div class="srow"><label><input type="checkbox">内部错误</label></div>
              <textarea class="note" aria-label="错误文本" readonly>正常</textarea>
            </div>
          </div>
        </form>
        <div class="hs d-flex mt-auto flex-shrink-0"><button aria-label="向左"><svg class="ico"><use href="#chl"/></svg></button><div class="thumb"><span class="grip"></span></div><button aria-label="向右"><svg class="ico"><use href="#chr"/></svg></button></div>
      </div>
    </div>
    <div class="insp">
      <div class="row1 d-flex justify-content-end">
        <button class="itab"><svg class="ico"><use href="#prop"/></svg>属性</button>
        <button class="itab on"><svg class="ico"><use href="#info"/></svg>信息</button>
        <button class="itab"><svg class="ico"><use href="#diag"/></svg>诊断</button>
        <span class="d-flex ms-3 mb-1" style="gap:2px"><svg class="ico"><use href="#w-res"/></svg><svg class="ico"><use href="#w-ls"/></svg><svg class="ico"><use href="#w-dn"/></svg></span>
      </div>
      <div class="row2 d-flex"><button class="jtab on">常规</button><button class="jtab w">交叉引用</button><button class="jtab">编译</button></div>
    </div>
  </section>

  <aside class="task">
    <div class="bar ps-2">任务</div>
    <div class="cap tall mt-1">选项</div>
    <div class="band"></div>
    <div class="cap ps-0"><svg class="ico"><use href="#chd"/></svg></div>
    <div class="in top">
      <div class="t">主轴</div>
      <input type="text" class="mt-1 mb-3" aria-label="查找">
      <input type="checkbox" aria-label="选项 1"><input type="checkbox" aria-label="选项 2"><input type="checkbox" aria-label="选项 3"><input type="checkbox" aria-label="选项 4"><input type="checkbox" aria-label="选项 5"><input type="checkbox" aria-label="选项 6">
      <input type="radio" aria-label="向下" class="mt-2"><input type="radio" aria-label="向上">
      <input type="button" aria-label="查找下一个" class="mt-1 mb-3">
      <div class="t">替换</div>
      <input type="text" aria-label="替换为" class="mt-2 mb-2"><input type="radio" aria-label="整个文档"><input type="radio" aria-label="从当前位置"><input type="radio" aria-label="选择">
      <input type="button" aria-label="替换" class="mb-0">
    </div>
    <button class="sbtn mb-1" aria-label="向左"><svg class="ico"><use href="#chl"/></svg></button>
    <div class="cap ps-0"><svg class="ico"><use href="#chd"/></svg></div>
    <div class="in"><div class="t">编辑</div><input type="text" aria-label="语言" class="mt-2 mb-4"><div class="t mt-2">参考</div><input type="text" aria-label="参考语言" class="mt-2"></div>
  </aside>

  <section class="plcsim" aria-label="PLCSIM">
    <div class="cap d-flex align-items-center"><span class="logo">PLC<span>SIM</span></span><span class="ms-1">Siemens</span><span class="d-flex ms-auto"><svg class="ico"><use href="#w-res"/></svg><svg class="ico"><use href="#w-min"/></svg><svg class="ico"><use href="#w-x"/></svg></span></div>
    <div class="idn d-flex align-items-center justify-content-between"><span>PLC_1 [CPU 1214C DCDCDC]</span><svg class="ico"><use href="#shr"/></svg></div>
    <div class="body2 flex-shrink-0">
      <div class="sie">SIEMENS</div>
      <div class="d-flex justify-content-between" style="padding-top:10px">
        <div>
          <button class="pbtn dn sq d-flex align-items-center justify-content-center" aria-label="电源"><svg class="ico"><use href="#pwr"/></svg></button>
          <div class="lrow"><span class="led go"></span>RUN/STOP</div>
          <div class="lrow"><span class="led"></span>ERROR</div>
          <div class="lrow"><span class="led"></span>MAINT</div>
        </div>
        <div class="d-flex flex-column" style="gap:5px"><button class="pbtn dn">RUN</button><button class="pbtn">STOP</button><button class="pbtn">MRES</button></div>
      </div>
      <div class="d-flex justify-content-between ps-2 zh" style="padding-top:5px"><span>X1</span><span>192.168.0.1</span></div>
    </div>
    <div class="flex-grow-1 d-flex align-items-center ps-2 zh">&lt;无项目&gt;</div>
  </section>

  <div class="wm" aria-hidden="true"><div>西门子工业 &nbsp;技术论坛</div><div>support.industry.siemens.com/cs</div></div>
</main>
<script src="https://cdn.jsdelivr.net/npm/bootstrap@5.3.0/dist/js/bootstrap.bundle.min.js"></script>
<script>document.getElementById('ax').select();</script>
</body>
</html>
